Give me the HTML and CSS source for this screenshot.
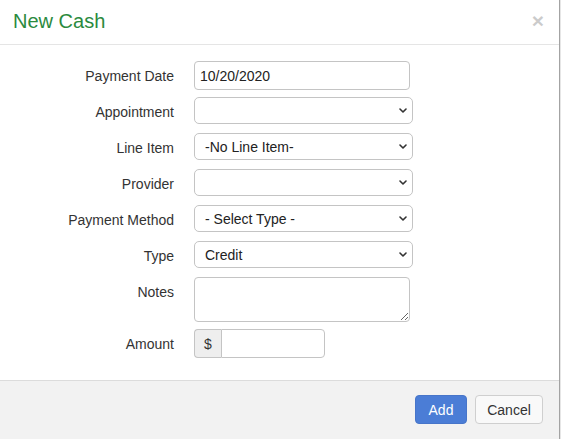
FILE: index.html
```html
<!DOCTYPE html>
<html>
<head>
<meta charset="utf-8">
<link rel="stylesheet" href="styles.css">
</head>
<body>
<div class="modal">
  <div class="modal-header">
    <h4 class="modal-title">New Cash</h4>
    <button class="close" type="button">×</button>
  </div>
  <div class="modal-body">
    <form class="form">
      <label class="label">Payment Date</label>
      <div class="control"><input class="input input-date" type="text" value="10/20/2020"></div>

      <label class="label">Appointment</label>
      <div class="control"><div class="select-wrap"><select class="select"><option></option></select><svg class="chev" width="8" height="5" viewBox="0 0 8 5"><path d="M1 1 L4 4 L7 1" fill="none" stroke="#333" stroke-width="1.6" stroke-linecap="round" stroke-linejoin="round"/></svg></div></div>

      <label class="label">Line Item</label>
      <div class="control"><div class="select-wrap"><select class="select"><option>-No Line Item-</option></select><svg class="chev" width="8" height="5" viewBox="0 0 8 5"><path d="M1 1 L4 4 L7 1" fill="none" stroke="#333" stroke-width="1.6" stroke-linecap="round" stroke-linejoin="round"/></svg></div></div>

      <label class="label">Provider</label>
      <div class="control"><div class="select-wrap"><select class="select"><option></option></select><svg class="chev" width="8" height="5" viewBox="0 0 8 5"><path d="M1 1 L4 4 L7 1" fill="none" stroke="#333" stroke-width="1.6" stroke-linecap="round" stroke-linejoin="round"/></svg></div></div>

      <label class="label">Payment Method</label>
      <div class="control"><div class="select-wrap"><select class="select"><option>- Select Type -</option></select><svg class="chev" width="8" height="5" viewBox="0 0 8 5"><path d="M1 1 L4 4 L7 1" fill="none" stroke="#333" stroke-width="1.6" stroke-linecap="round" stroke-linejoin="round"/></svg></div></div>

      <label class="label">Type</label>
      <div class="control"><div class="select-wrap"><select class="select"><option>Credit</option></select><svg class="chev" width="8" height="5" viewBox="0 0 8 5"><path d="M1 1 L4 4 L7 1" fill="none" stroke="#333" stroke-width="1.6" stroke-linecap="round" stroke-linejoin="round"/></svg></div></div>

      <label class="label">Notes</label>
      <div class="control"><textarea class="textarea"></textarea></div>

      <label class="label">Amount</label>
      <div class="control"><div class="input-group"><span class="addon">$</span><input class="input input-amount" type="text"></div></div>
    </form>
  </div>
  <div class="modal-footer">
    <button class="btn btn-primary" type="button">Add</button>
    <button class="btn btn-default" type="button">Cancel</button>
  </div>
</div>
</body>
</html>
```
FILE: styles.css
```css
html, body {
  margin: 0;
  padding: 0;
  background: #e6e6e6;
  font-family: "Liberation Sans", Arial, sans-serif;
  font-size: 14px;
  color: #333;
}

.modal {
  width: 559px;
  height: 439px;
  background: #fff;
  border-right: 1px solid #a3a3a3;
  display: flex;
  flex-direction: column;
  overflow: hidden;
}

.modal-header {
  height: 44px;
  border-bottom: 1px solid #e5e5e5;
  display: flex;
  align-items: center;
  justify-content: space-between;
  padding: 0 15px 0 13px;
}

.modal-title {
  margin: 0 0 3px 0;
  font-size: 20px;
  font-weight: normal;
  color: #2b8a3e;
  line-height: 24px;
}

.close {
  border: 0;
  background: none;
  padding: 0;
  margin: 0 0 4px 0;
  font-family: "Liberation Sans", Arial, sans-serif;
  font-size: 21px;
  font-weight: bold;
  line-height: 1;
  color: #000;
  opacity: 0.2;
}

.modal-body {
  padding: 16px 0 22px 0;
}

.form {
  display: grid;
  grid-template-columns: 174px 1fr;
  column-gap: 20px;
  row-gap: 7px;
}

.label {
  text-align: right;
  padding-top: 5px;
  line-height: 20px;
  color: #333;
}

.control {
  min-height: 29px;
}

.input {
  box-sizing: border-box;
  height: 29px;
  border: 1px solid #c4c4c4;
  border-radius: 4px;
  padding: 0 5px;
  font-family: "Liberation Sans", Arial, sans-serif;
  font-size: 14px;
  color: #222;
  outline: none;
  margin: 0;
  display: block;
}

.input-date {
  width: 216px;
}

.select-wrap {
  position: relative;
  width: 219px;
  height: 27px;
}

.select {
  -webkit-appearance: none;
  appearance: none;
  box-sizing: border-box;
  width: 219px;
  height: 27px;
  border: 1px solid #c4c4c4;
  border-radius: 5px;
  background: #fff;
  padding: 0 20px 0 10px;
  margin: 0;
  font-family: "Liberation Sans", Arial, sans-serif;
  font-size: 14px;
  color: #222;
  display: block;
}

.chev {
  position: absolute;
  right: 6px;
  top: 11px;
  pointer-events: none;
}

.textarea {
  box-sizing: border-box;
  display: block;
  width: 216px;
  height: 45px;
  margin: 0;
  border: 1px solid #c4c4c4;
  border-radius: 4px;
  padding: 4px 5px;
  font-family: "Liberation Sans", Arial, sans-serif;
  font-size: 14px;
  outline: none;
}

.input-group {
  display: flex;
  width: 131px;
  height: 29px;
}

.addon {
  box-sizing: border-box;
  width: 27px;
  height: 29px;
  display: flex;
  align-items: center;
  justify-content: center;
  background: #eee;
  border: 1px solid #c4c4c4;
  border-right: 0;
  border-radius: 4px 0 0 4px;
  color: #333;
  font-size: 14px;
}

.input-amount {
  width: 104px;
  border-radius: 0 4px 4px 0;
}

.modal-footer {
  flex: 1;
  background: #f2f2f2;
  border-top: 1px solid #dcdcdc;
  display: flex;
  justify-content: flex-end;
  align-items: flex-start;
  gap: 8px;
  padding: 14px 16px 0 0;
}

.btn {
  box-sizing: border-box;
  height: 29px;
  border-radius: 4px;
  font-family: "Liberation Sans", Arial, sans-serif;
  font-size: 14px;
  padding: 0;
  margin: 0;
  text-align: center;
}

.btn-primary {
  width: 52px;
  background: #4b7dd6;
  border: 1px solid #4775c9;
  color: #fff;
}

.btn-default {
  width: 68px;
  background: #f9f9f9;
  border: 1px solid #cfcfcf;
  color: #333;
}
```
